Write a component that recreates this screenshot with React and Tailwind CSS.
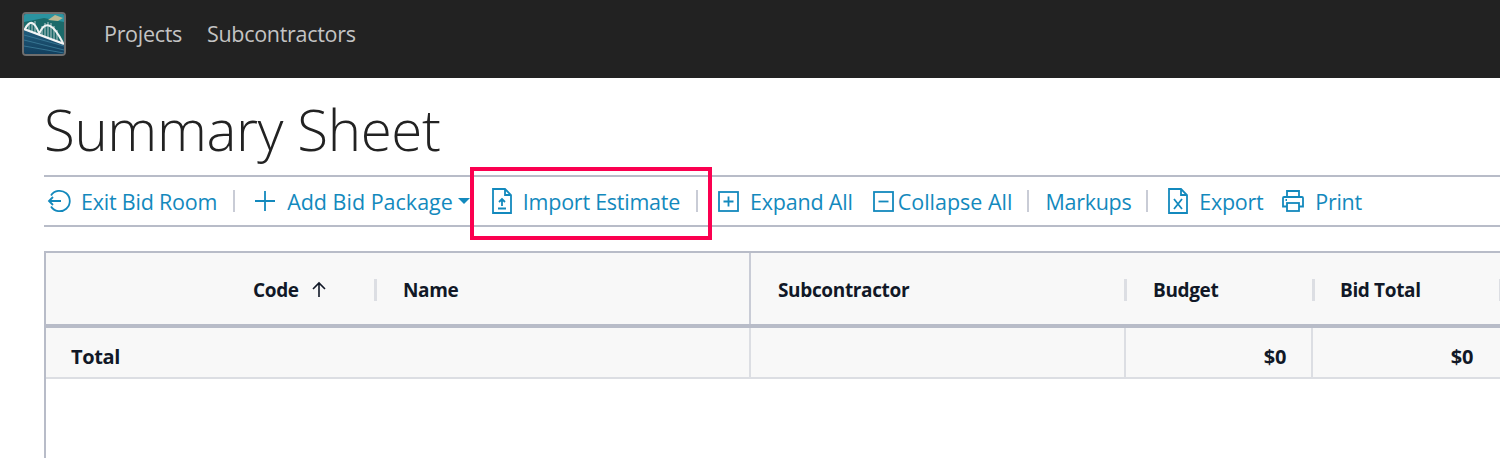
import React from 'react';

// Toolbar glyphs are drawn by hand, stroke colour comes from currentColor.
function ExitIcon() {
  return (
    <svg className="shrink-0" width="24" height="24" viewBox="0 0 24 24" fill="none" stroke="currentColor" strokeWidth="1.8">
      <path d="M4 6.5 A10.2 10.2 0 1 1 4 17.5" />
      <path d="M2 12 H14 M6 8 L2 12 L6 16" />
    </svg>
  );
}

function PlusIcon() {
  return (
    <svg className="ml-[19px] shrink-0" width="22" height="22" viewBox="0 0 22 22" fill="none" stroke="currentColor" strokeWidth="1.8">
      <path d="M11 1 V21 M1 11 H21" />
    </svg>
  );
}

function ImportIcon() {
  return (
    <svg className="ml-[22px] shrink-0" width="20" height="26" viewBox="0 0 20 26" fill="none" stroke="currentColor" strokeWidth="1.8">
      <path d="M1 1 H13 L19 7 V25 H1 Z M13 1 V7 H19" />
      <path d="M10 18 V11 M7 14 L10 11 L13 14 M6 20.5 H14" strokeWidth="1.8" />
    </svg>
  );
}

function SquareIcon({ minus, className }) {
  return (
    <svg className={className} width="21" height="21" viewBox="0 0 21 21" fill="none" stroke="currentColor" strokeWidth="1.8">
      <rect x="1" y="1" width="19" height="19" />
      {minus ? <path d="M5.5 10.5 H15.5" /> : <path d="M5.5 10.5 H15.5 M10.5 5.5 V15.5" />}
    </svg>
  );
}

function ExportIcon() {
  return (
    <svg className="ml-[20px] shrink-0" width="20" height="26" viewBox="0 0 20 26" fill="none" stroke="currentColor" strokeWidth="1.8">
      <path d="M1 1 H13 L19 7 V25 H1 Z M13 1 V7 H19" />
      <path d="M6 11 L14 21 M14 11 L6 21" />
    </svg>
  );
}

function PrintIcon() {
  return (
    <svg className="ml-[19px] shrink-0" width="22" height="22" viewBox="0 0 22 22" fill="none" stroke="currentColor" strokeWidth="1.8">
      <path d="M5 7 V1 H17 V7" />
      <path d="M5 16.5 H1 V8 Q1 7 2 7 H20 Q21 7 21 8 V16.5 H17" />
      <rect x="5" y="13" width="12" height="8" />
      <path d="M3.5 10 H5" />
    </svg>
  );
}

function Logo() {
  return (
    <div className="h-[44px] w-[44px] shrink-0 overflow-hidden rounded-[4px] border-2 border-[#6e6e6e]">
      <svg width="40" height="40" viewBox="0 0 40 40">
        <defs>
          <linearGradient id="water" x1="0" y1="0" x2="0" y2="1">
            <stop offset="0" stopColor="#2c6f8f" />
            <stop offset="1" stopColor="#123f5e" />
          </linearGradient>
        </defs>
        <rect width="40" height="40" fill="url(#water)" />
        <rect width="40" height="8" fill="#2a93a0" />
        <path d="M0 8 L20 4 L40 8 V28 L0 16 Z" fill="#1b6a6a" />
        <path d="M24 6 L31 1 L39 4 L34 7 Z" fill="#b9b893" />
        <path d="M0 26 L40 36 M0 32 L40 39 M0 21 L40 32" stroke="#3f7f9c" strokeWidth="0.8" />
        <path d="M5 10 V17 M8 8 V18 M11 7 V19 M18 12 V22 M21 9 V23 M24 8 V24 M27 9 V25 M30 12 V26 M33 16 V28" stroke="#b9c8ca" strokeWidth="1" />
        <path d="M1 15 Q8 1 15 19 M15 20 Q24 -1 39 29" fill="none" stroke="#eef2f2" strokeWidth="2" />
        <path d="M0 15 L40 30" stroke="#f4f6f6" strokeWidth="2.4" />
      </svg>
    </div>
  );
}

function Sep({ className }) {
  return <span className={'h-[22px] w-[2px] shrink-0 bg-[#c9ccd6] ' + className} />;
}

function Handle() {
  return <span className="ml-auto h-[22px] w-[3px] shrink-0 bg-[#dcdee3]" />;
}

// Text sits 1px below the icons' centre line in the toolbar.
function Label({ className, children }) {
  return <span className={'pt-[2px] ' + className}>{children}</span>;
}

export default function App() {
  return (
    <div className="relative h-[458px] w-[1500px] overflow-hidden bg-white font-['Open_Sans',sans-serif] text-[#111827]">
      <header className="flex h-[78px] items-center bg-[#222222] pb-[10px] pl-[22px]">
        <Logo />
        <nav className="ml-[38px] flex gap-[25px] text-[21.5px] tracking-[-0.3px] text-[#c4c4c4]">
          <a>Projects</a>
          <a>Subcontractors</a>
        </nav>
      </header>

      <main className="pl-[44px]">
        <h1 className="pt-[14px] text-[56.5px] font-light leading-[76px] tracking-[-0.4px] text-[#222222]">Summary Sheet</h1>

        <div className="mt-[7px] flex h-[52px] items-center border-y-2 border-[#b8bcc8] pl-[3px] text-[21.5px] tracking-[-0.3px] text-[#1389bd]">
          <ExitIcon />
          <Label className="ml-[10px] tracking-[-0.22px]">Exit Bid Room</Label>
          <Sep className="ml-[16px]" />
          <PlusIcon />
          <Label className="ml-[11px] tracking-[0px]">Add Bid Package</Label>
          <span className="ml-[5px] h-0 w-0 border-x-[6px] border-t-[6px] border-x-transparent border-t-[#1389bd]" />
          <ImportIcon />
          <Label className="ml-[11px] tracking-[-0.25px]">Import Estimate</Label>
          <Sep className="ml-[16px]" />
          <SquareIcon className="ml-[20px] shrink-0" />
          <Label className="ml-[11px] tracking-[-0.2px]">Expand All</Label>
          <SquareIcon minus className="ml-[20px] shrink-0" />
          <Label className="ml-[4px] tracking-[0px]">Collapse All</Label>
          <Sep className="ml-[15px]" />
          <Label className="ml-[16px]">Markups</Label>
          <Sep className="ml-[15px]" />
          <ExportIcon />
          <Label className="ml-[11px]">Export</Label>
          <PrintIcon />
          <Label className="ml-[11px]">Print</Label>
        </div>

        <section className="mt-[24px] h-[300px] border-t-2 border-l-2 border-[#b8bcc8] text-[19px] font-bold tracking-[-0.35px]">
          <div className="flex h-[71px] items-center bg-[#f8f8f8]">
            <div className="flex h-full w-[331px] shrink-0 items-center pt-[2px]">
              <span className="ml-[207px] pt-[2px]">Code</span>
              <svg className="ml-[11px]" width="18" height="18" viewBox="0 0 18 18" fill="none" stroke="currentColor" strokeWidth="1.6">
                <path d="M9 16 V2 M3 8 L9 2 L15 8" />
              </svg>
              <Handle />
            </div>
            <div className="flex h-full w-[374px] shrink-0 items-center border-r-2 border-[#c9ccd6] pt-[2px]">
              <span className="ml-[26px] pt-[2px]">Name</span>
            </div>
            <div className="flex h-full w-[376px] shrink-0 items-center pt-[2px]">
              <span className="ml-[27px] pt-[2px]">Subcontractor</span>
              <Handle />
            </div>
            <div className="flex h-full w-[188px] shrink-0 items-center pt-[2px]">
              <span className="ml-[26px] pt-[2px]">Budget</span>
              <Handle />
            </div>
            <div className="flex h-full w-[187px] shrink-0 items-center pt-[2px]">
              <span className="ml-[25px] pt-[2px]">Bid Total</span>
              <Handle />
            </div>
          </div>
          <div className="h-[4px] bg-[#b8bcc8]" />
          <div className="flex h-[51px] items-center border-b-2 border-[#dcdee3] bg-[#f8f8f8] text-[20px]">
            <div className="flex h-full w-[705px] shrink-0 items-center border-r-2 border-[#dcdee3] pl-[25px] pt-[8px]">Total</div>
            <div className="h-full w-[375px] shrink-0 border-r-2 border-[#dcdee3]" />
            <div className="flex h-full w-[187px] shrink-0 items-center justify-end border-r-2 border-[#dcdee3] pr-[25px] pt-[8px]">$0</div>
            <div className="flex h-full w-[187px] shrink-0 items-center justify-end pr-[27px] pt-[8px]">$0</div>
          </div>
        </section>
      </main>

      {/* Callout drawn over the toolbar */}
      <div className="absolute left-[470px] top-[167px] h-[73px] w-[242px] border-4 border-[#fb0050]" />
    </div>
  );
}
